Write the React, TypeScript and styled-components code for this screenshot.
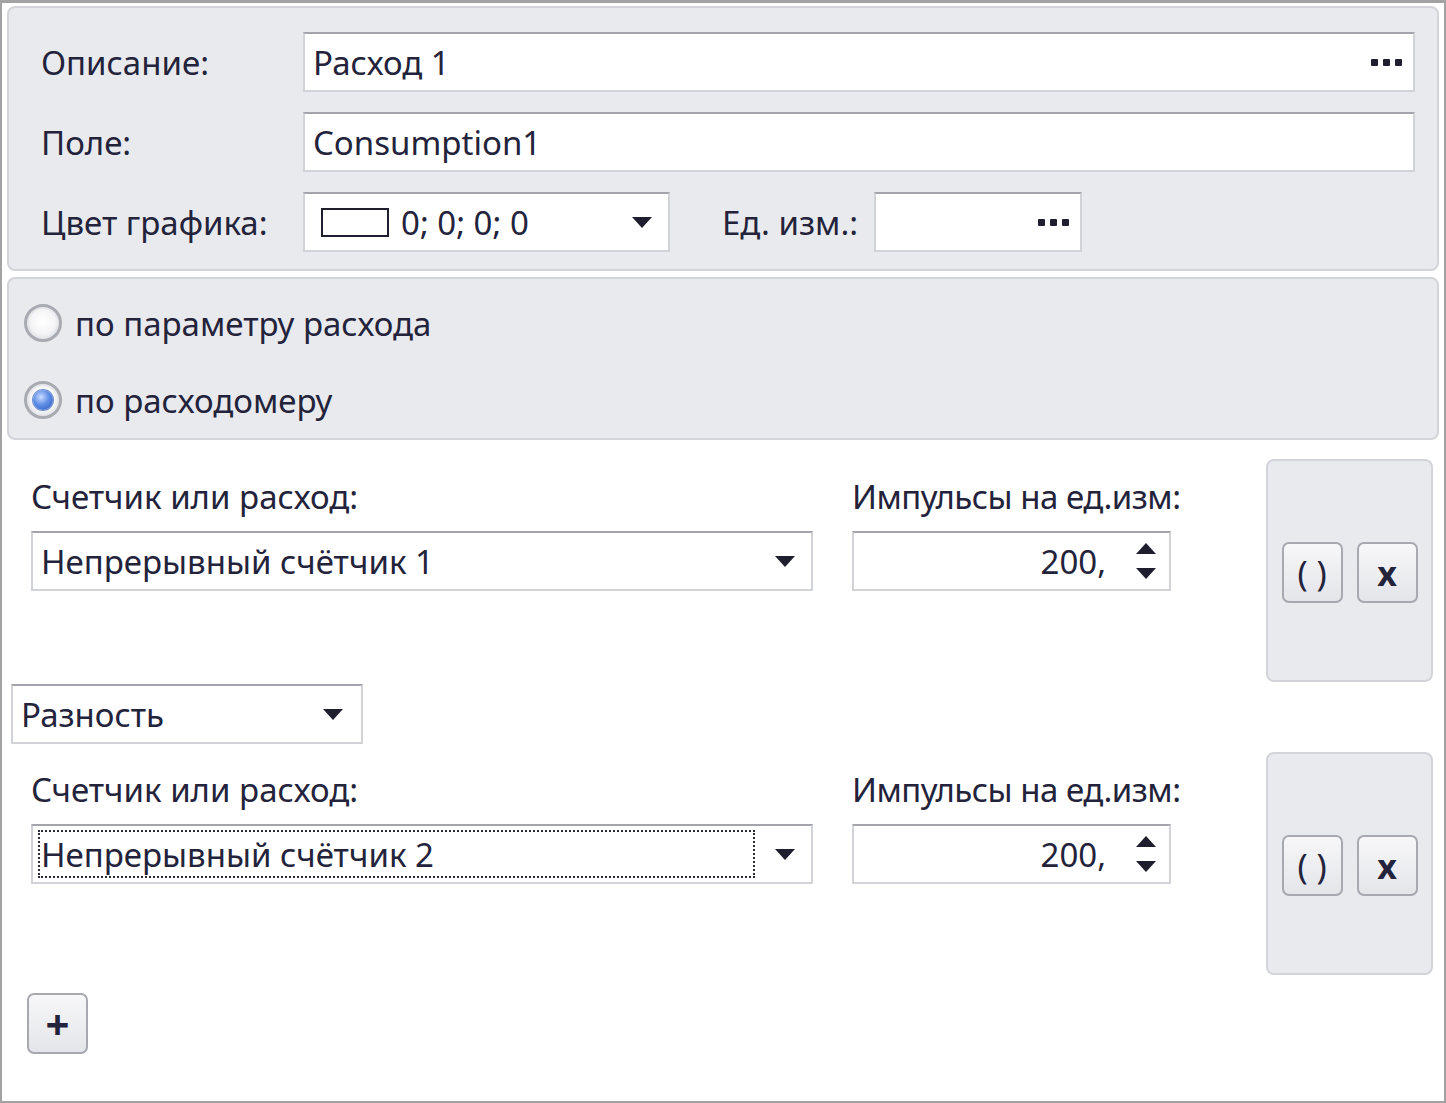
import React from 'react';
import styled, { createGlobalStyle } from 'styled-components';

const GlobalStyle = createGlobalStyle`
  html, body {
    margin: 0;
    padding: 0;
    background: #ffffff;
  }
  body {
    font-family: 'Noto Sans', 'DejaVu Sans', sans-serif;
    color: #23233b;
  }
`;

const Frame = styled.div`
  width: 1446px;
  height: 1103px;
  box-sizing: border-box;
  border: 2px solid #a2a2a2;
  border-top-width: 3px;
  padding: 3px 5px 0 5px;
  display: flex;
  flex-direction: column;
  gap: 6px;
  font-size: 33px;
  background: #fff;
`;

const GrayPanel = styled.div`
  background: #e9eaee;
  border: 2px solid #d3d4d9;
  border-radius: 8px;
  box-sizing: border-box;
`;

const PropsPanel = styled(GrayPanel)`
  height: 265px;
  padding: 24px 22px 0 32px;
  display: flex;
  flex-direction: column;
  gap: 20px;
`;

const FieldRow = styled.div`
  display: flex;
  align-items: center;
  height: 60px;
`;

const Label = styled.div<{ $width?: number; $ml?: number }>`
  width: ${({ $width }) => ($width ? `${$width}px` : 'auto')};
  margin-left: ${({ $ml }) => ($ml ? `${$ml}px` : '0')};
  flex-shrink: 0;
  white-space: nowrap;
  line-height: 1;
`;

const Box = styled.div<{ $width?: number; $grow?: boolean; $ml?: number }>`
  box-sizing: border-box;
  height: 60px;
  width: ${({ $width }) => ($width ? `${$width}px` : 'auto')};
  flex: ${({ $grow }) => ($grow ? '1' : 'none')};
  margin-left: ${({ $ml }) => ($ml ? `${$ml}px` : '0')};
  background: #fff;
  border: 2px solid #d2d3d8;
  border-top-color: #a3a4ac;
  display: flex;
  align-items: center;
  padding: 0 10px 0 8px;
  white-space: nowrap;
`;

const BoxText = styled.span<{ $right?: boolean }>`
  flex: 1;
  text-align: ${({ $right }) => ($right ? 'right' : 'left')};
`;

const Dots = styled.span`
  display: flex;
  gap: 5px;
  margin-right: 1px;
  & > i {
    width: 7px;
    height: 7px;
    background: #1e1e2e;
    border-radius: 1px;
  }
`;

const DropArrow = styled.span<{ $mr?: number }>`
  width: 0;
  height: 0;
  border-left: 10px solid transparent;
  border-right: 10px solid transparent;
  border-top: 11px solid #1e1e2e;
  margin-right: ${({ $mr }) => ($mr ?? 4)}px;
  flex-shrink: 0;
`;

const Swatch = styled.span`
  width: 68px;
  height: 29px;
  box-sizing: border-box;
  border: 2px solid #1e1e2e;
  background: #fff;
  margin: 0 12px 0 8px;
  flex-shrink: 0;
`;

const RadioPanel = styled(GrayPanel)`
  height: 163px;
  padding: 25px 0 0 15px;
  display: flex;
  flex-direction: column;
  gap: 39px;
`;

const RadioRow = styled.div`
  display: flex;
  align-items: center;
  gap: 13px;
  height: 38px;
`;

const RadioCircle = styled.span<{ $checked?: boolean }>`
  width: 38px;
  height: 38px;
  box-sizing: border-box;
  border-radius: 50%;
  border: 3px solid #a9abb3;
  background: radial-gradient(circle at 50% 45%, #ffffff 0%, #f5f5f7 50%, #d6d7dc 100%);
  display: flex;
  align-items: center;
  justify-content: center;
  box-shadow: inset 0 0 0 2px #e6e7ea;
  &::after {
    content: '';
    display: ${({ $checked }) => ($checked ? 'block' : 'none')};
    width: 20px;
    height: 20px;
    border-radius: 50%;
    background: radial-gradient(circle at 40% 35%, #c9dcff 0%, #5f8ee6 45%, #2a56b8 100%);
    box-shadow: 0 0 0 1px #6f8fcf;
  }
`;

const Content = styled.div`
  display: flex;
  flex-direction: column;
  padding-top: 13px;
`;

const Block = styled.div`
  display: flex;
  align-items: flex-start;
  height: 222px;
`;

const Column = styled.div<{ $width: number; $ml: number }>`
  width: ${({ $width }) => $width}px;
  margin-left: ${({ $ml }) => $ml}px;
  padding-top: 21px;
  display: flex;
  flex-direction: column;
  gap: 18px;
  flex-shrink: 0;
`;

const PulseLabel = styled(Label)`
  letter-spacing: -0.5px;
`;

const FocusRect = styled.span`
  flex: 1;
  align-self: stretch;
  margin: 4px 20px 4px -3px;
  border: 2px dotted #2a2a3a;
  display: flex;
  align-items: center;
  padding-left: 1px;
`;

const SpinArrows = styled.span`
  display: flex;
  flex-direction: column;
  gap: 14px;
  margin: 0 3px 0 30px;
  & > i:first-child {
    border-left: 10px solid transparent;
    border-right: 10px solid transparent;
    border-bottom: 11px solid #1e1e2e;
  }
  & > i:last-child {
    border-left: 10px solid transparent;
    border-right: 10px solid transparent;
    border-top: 11px solid #1e1e2e;
  }
`;

const ActionsPanel = styled(GrayPanel)`
  width: 167px;
  height: 223px;
  margin-left: auto;
  margin-right: 6px;
  display: flex;
  align-items: center;
  justify-content: center;
  gap: 14px;
  padding-top: 4px;
`;

const ToolButton = styled.button<{ $bold?: boolean; $size?: number }>`
  width: 61px;
  height: 61px;
  box-sizing: border-box;
  border: 2px solid #a7a8b0;
  border-radius: 7px;
  background: linear-gradient(#f7f7f9, #e4e5e9);
  font-family: 'Noto Sans', 'DejaVu Sans', sans-serif;
  font-size: ${({ $size }) => ($size ?? 32)}px;
  font-weight: ${({ $bold }) => ($bold ? 700 : 400)};
  color: #23233b;
  padding: 0;
  display: flex;
  align-items: center;
  justify-content: center;
  line-height: 1;
`;

const OpRow = styled.div`
  height: 60px;
  margin: 3px 0 8px 4px;
  display: flex;
`;

const AddRow = styled.div`
  padding: 19px 0 0 20px;
`;

const counters = [
  { name: 'Непрерывный счётчик 1', focused: false },
  { name: 'Непрерывный счётчик 2', focused: true },
];

const CounterBlock: React.FC<{ name: string; focused: boolean }> = ({ name, focused }) => (
  <Block>
    <Column $width={782} $ml={24}>
      <Label>Счетчик или расход:</Label>
      <Box>
        {focused ? <FocusRect>{name}</FocusRect> : <BoxText>{name}</BoxText>}
        <DropArrow $mr={6} />
      </Box>
    </Column>
    <Column $width={319} $ml={39}>
      <PulseLabel>Импульсы на ед.изм:</PulseLabel>
      <Box>
        <BoxText $right>200,</BoxText>
        <SpinArrows>
          <i />
          <i />
        </SpinArrows>
      </Box>
    </Column>
    <ActionsPanel>
      <ToolButton $size={34}>( )</ToolButton>
      <ToolButton $bold $size={34}>x</ToolButton>
    </ActionsPanel>
  </Block>
);

export default function App() {
  return (
    <>
      <GlobalStyle />
      <Frame>
        <PropsPanel>
          <FieldRow>
            <Label $width={262}>Описание:</Label>
            <Box $grow>
              <BoxText>Расход 1</BoxText>
              <Dots>
                <i />
                <i />
                <i />
              </Dots>
            </Box>
          </FieldRow>
          <FieldRow>
            <Label $width={262}>Поле:</Label>
            <Box $grow>
              <BoxText>Consumption1</BoxText>
            </Box>
          </FieldRow>
          <FieldRow>
            <Label $width={262}>Цвет графика:</Label>
            <Box $width={367}>
              <Swatch />
              <BoxText>0; 0; 0; 0</BoxText>
              <DropArrow $mr={6} />
            </Box>
            <Label $ml={52}>Ед. изм.:</Label>
            <Box $width={208} $ml={16}>
              <BoxText />
              <Dots>
                <i />
                <i />
                <i />
              </Dots>
            </Box>
          </FieldRow>
        </PropsPanel>
        <RadioPanel>
          <RadioRow>
            <RadioCircle />
            <span>по параметру расхода</span>
          </RadioRow>
          <RadioRow>
            <RadioCircle $checked />
            <span>по расходомеру</span>
          </RadioRow>
        </RadioPanel>
        <Content>
          <CounterBlock {...counters[0]} />
          <OpRow>
            <Box $width={352}>
              <BoxText>Разность</BoxText>
              <DropArrow $mr={8} />
            </Box>
          </OpRow>
          <CounterBlock {...counters[1]} />
          <AddRow>
            <ToolButton $bold $size={42}>+</ToolButton>
          </AddRow>
        </Content>
      </Frame>
    </>
  );
}
